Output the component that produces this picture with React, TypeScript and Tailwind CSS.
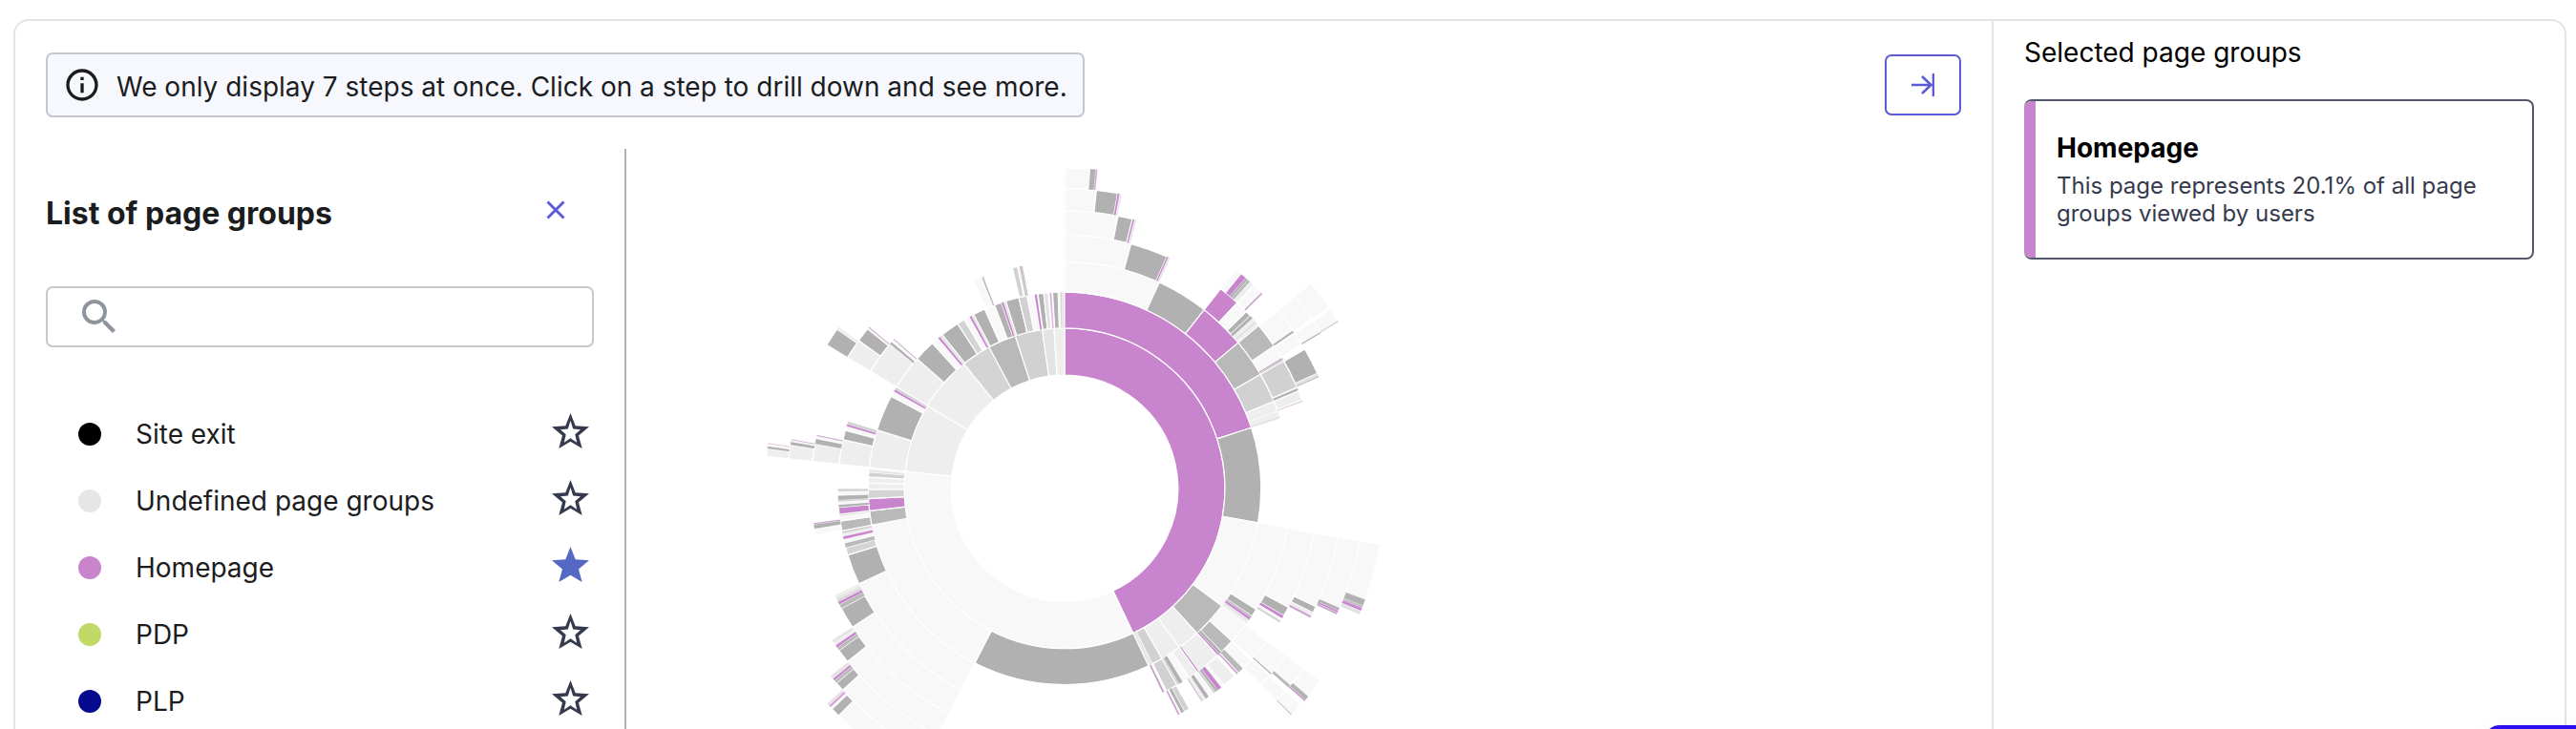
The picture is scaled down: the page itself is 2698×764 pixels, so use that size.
import { MdOutlineInfo, MdSearch } from 'react-icons/md';

const PURPLE = '#c885ce';
const FAINT = '#f8f8f8';
const PALE = '#eeeeee';
const MIST = '#e3e3e3';
const SOFT = '#d1d1d1';
const MID = '#b9b9b9';
const GREY = '#b1b1b1';

type Sector = [start: number, end: number, color: string];

// One list per ring, innermost first; angles are degrees clockwise from the top.
const rings: Sector[][] = [
  [
    [0, 154.7, PURPLE], [154.7, 276.1, FAINT], [276.1, 301.1, PALE], [301.1, 321.1, PALE],
    [321.1, 331.9, '#d4d4d4'], [331.9, 342.1, MID], [342.1, 352, SOFT], [352, 356.2, MIST], [356.2, 360, PALE],
  ],
  [
    [0, 72, PURPLE], [72, 100.1, GREY], [100.1, 126.8, FAINT], [126.8, 137.6, MID], [137.6, 144.2, PALE],
    [144.2, 150.3, PALE], [150.3, 153.5, SOFT], [153.5, 154.1, MIST], [154.1, 154.7, MIST],
    [154.7, 207.2, GREY], [207.2, 259.2, FAINT], [259.2, 263.4, MID], [263.4, 267, PURPLE], [267, 269.7, '#d4d4d4'],
    [269.7, 271.6, PALE], [271.6, 273.3, PALE], [273.3, 274.8, SOFT], [274.8, 275.5, MIST], [275.5, 276.1, FAINT],
    [276.1, 287.3, PALE], [287.3, 298, GREY], [298, 299.6, FAINT], [299.6, 300.3, PURPLE], [300.3, 301.1, SOFT],
    [301.1, 311.3, PALE], [311.3, 317.7, GREY], [317.7, 319.9, FAINT], [319.9, 320.6, PURPLE], [320.6, 321.5, MIST],
    [321.5, 327, GREY], [327, 329.3, '#d4d4d4'], [329.3, 331, FAINT], [331, 331.7, PURPLE], [331.7, 332.4, MIST],
    [332.4, 336, GREY], [336, 339.1, FAINT], [339.1, 341.2, GREY], [341.2, 341.9, PURPLE], [341.9, 342.6, MIST],
    [342.6, 346.5, GREY], [346.5, 349, SOFT], [349, 351.2, FAINT], [351.2, 351.9, PURPLE], [352.2, 353.9, GREY],
    [353.9, 355.2, MIST], [355.6, 356.2, '#dcb4e0'], [356.5, 358.1, GREY], [358.1, 358.7, FAINT],
    [358.7, 359.2, SOFT], [359.2, 359.8, MIST],
  ],
  [
    [0, 24.7, FAINT], [24.7, 38, GREY], [38, 50, PURPLE], [50, 59.8, MID], [59.8, 67.4, SOFT], [67.4, 70.1, PALE],
    [70.1, 71.3, PALE], [71.3, 72, MIST],
    [100.1, 122.3, FAINT], [122.3, 124.3, GREY], [124.3, 124.8, MID], [124.8, 125.5, PURPLE], [125.5, 126.1, MIST],
    [126.1, 126.8, PALE], [126.8, 132.4, FAINT], [132.4, 136.2, MID], [136.2, 137, GREY], [137, 137.5, PURPLE],
    [137.6, 143.7, PALE], [143.7, 144.2, PURPLE], [144.2, 146.7, PALE], [146.7, 148.6, FAINT], [148.6, 149.7, GREY],
    [149.7, 150.3, SOFT], [150.3, 153.3, SOFT], [153.9, 154.4, '#bf9dc3'],
    [207.2, 245.1, FAINT], [245.1, 252.9, GREY], [252.9, 254.8, '#d4d4d4'], [254.8, 256, MID], [256, 257, FAINT],
    [257, 257.8, PURPLE], [257.8, 258.5, PALE], [258.5, 259.2, SOFT], [259.2, 261.7, MID], [261.7, 263, FAINT],
    [263, 263.4, SOFT], [263.4, 265.2, PURPLE], [265.2, 265.9, GREY], [265.9, 266.6, FAINT], [266.6, 267, SOFT],
    [267, 268.2, GREY], [268.2, 269.2, FAINT], [269.2, 269.9, SOFT],
    [276.1, 282.4, PALE], [282.4, 284.8, GREY], [284.8, 285.9, FAINT], [285.9, 286.5, PURPLE], [286.5, 287.2, SOFT],
    [301.1, 309.6, PALE], [309.6, 310.3, GREY], [310.3, 311, FAINT], [311, 311.3, '#c9a9cc'],
    [336.4, 338.6, FAINT], [338.6, 339, GREY], [346.7, 348, SOFT], [348, 348.5, FAINT], [348.5, 349, MID],
    [349, 349.3, '#c9a9cc'],
  ],
  [
    [0, 15.2, FAINT], [15.2, 23.8, GREY], [23.8, 24.2, PURPLE], [24.2, 24.6, MIST], [38, 42.9, PURPLE],
    [42.9, 45.8, FAINT], [45.8, 47.1, GREY], [47.1, 47.9, GREY], [47.9, 48.6, PALE], [48.6, 49.3, MIST], [49.3, 50, PALE],
    [50, 55.8, MID], [55.8, 59, FAINT], [59, 59.4, GREY], [59.4, 59.8, '#d9b3dc'], [59.8, 66.5, SOFT],
    [66.7, 67.3, GREY], [67.4, 69.6, PALE], [69.7, 70, '#dcc0de'],
    [100.1, 118, FAINT], [118, 120.2, GREY], [120.2, 120.9, PURPLE], [120.9, 121.5, FAINT], [121.5, 122, SOFT],
    [127, 132.2, FAINT], [132.5, 135.3, FAINT], [135.3, 136.6, MID], [136.8, 137.2, '#cf9fd3'],
    [137.8, 141, PALE], [141, 141.8, FAINT], [141.8, 142.8, PURPLE], [142.8, 143.5, GREY], [143.5, 144, SOFT],
    [144.2, 145.3, FAINT], [145.3, 146.2, GREY], [146.2, 146.9, PALE], [146.9, 147.3, '#dac4dc'],
    [150.5, 151.8, SOFT], [151.8, 152.6, GREY], [152.6, 153, FAINT], [153, 153.4, '#c593ca'],
    [207.2, 236.8, FAINT], [236.8, 241.7, GREY], [241.7, 242.7, MID], [242.7, 243.4, PURPLE], [243.4, 243.9, SOFT],
    [243.9, 244.5, MIST], [244.5, 245.1, PALE],
    [259.3, 260.8, FAINT], [260.8, 261.8, GREY], [261.8, 262.1, '#c593ca'],
    [276.1, 280.1, PALE], [280.1, 281.3, GREY], [281.3, 281.9, FAINT], [281.9, 282.2, '#c9a0cd'],
    [301.1, 305.7, PALE], [305.7, 309, GREY], [309, 309.3, FAINT], [309.3, 309.6, '#c9a9cc'],
  ],
  [
    [0, 11.1, FAINT], [11.1, 14.1, GREY], [14.2, 14.6, PURPLE], [14.6, 15, MIST], [38.1, 39.5, FAINT],
    [39.5, 40.7, PURPLE], [40.7, 41.3, GREY], [41.3, 41.9, MID], [41.9, 42.9, PALE], [42.9, 45, FAINT],
    [45.1, 45.5, '#c9a9cc'],
    [50.2, 55.3, FAINT], [55.3, 55.8, GREY], [56, 58.8, FAINT], [59.9, 65.5, GREY], [65.5, 66, MIST], [66, 66.4, '#cdbdcf'],
    [100.1, 115.2, FAINT], [115.2, 116.6, GREY], [116.6, 117.3, PALE], [117.3, 117.8, '#cfa3d3'],
    [127, 131.8, FAINT], [131.8, 132.1, GREY], [132.5, 135, FAINT],
    [207.2, 231.4, FAINT], [231.4, 234.3, GREY], [234.3, 235, MID], [235, 235.6, PURPLE], [235.6, 236.2, PALE], [236.2, 236.8, MIST],
    [276.1, 279, PALE], [279, 279.7, GREY], [279.7, 280, FAINT], [280, 280.2, '#c9a0cd'],
    [301.1, 305, GREY], [305, 305.6, PALE],
  ],
  [
    [0, 6.1, FAINT], [6.1, 10.2, GREY], [10.2, 10.6, PURPLE], [10.7, 11, MIST],
    [50.2, 55.5, FAINT], [56, 58.5, FAINT], [58.5, 58.8, GREY],
    [100.1, 113.5, FAINT], [113.5, 114.1, GREY], [114.1, 114.5, PURPLE], [114.5, 114.9, '#c4a9c7'],
    [127, 131.1, FAINT], [131.1, 131.7, MID], [132.5, 135, FAINT],
    [207.2, 227.7, FAINT], [227.7, 229.5, GREY], [229.5, 230.1, MID], [230.1, 230.6, PURPLE], [230.6, 231.3, MIST],
    [276.1, 277.6, PALE], [277.6, 278.1, GREY], [278.1, 278.4, FAINT], [278.5, 278.7, '#d9b9dc'],
  ],
  [
    [0, 4.6, FAINT], [4.6, 5.6, GREY], [5.6, 5.9, '#cf9fd3'],
    [50.2, 55.6, FAINT], [56, 58.4, FAINT], [58.4, 58.7, SOFT],
    [100.1, 110.3, FAINT], [110.3, 111.5, GREY], [111.5, 111.9, MID], [111.9, 112.5, PURPLE], [112.5, 113.2, MIST],
    [127, 130.5, FAINT], [130.5, 131.3, GREY], [131.3, 131.6, '#c593ca'], [132.5, 134.8, FAINT], [134.8, 135.1, SOFT],
    [207.2, 224.8, FAINT], [224.8, 226.5, GREY], [226.5, 226.9, FAINT], [226.9, 227.3, '#d29bd7'], [227.3, 227.8, MIST],
  ],
];

// Rings cover equal areas, so the radius grows with the square root of the depth.
const radius = (depth: number) => 118.75 * Math.sqrt(depth);

function arc(depth: number, start: number, end: number) {
  const inner = radius(depth);
  const outer = radius(depth + 1);
  const at = (r: number, deg: number) => {
    const a = (deg * Math.PI) / 180;
    return `${(r * Math.sin(a)).toFixed(2)} ${(-r * Math.cos(a)).toFixed(2)}`;
  };
  const large = end - start > 180 ? 1 : 0;
  return `M${at(outer, start)}A${outer} ${outer} 0 ${large} 1 ${at(outer, end)}L${at(inner, end)}A${inner} ${inner} 0 ${large} 0 ${at(inner, start)}Z`;
}

function Sunburst() {
  return (
    <svg className="ml-[123px] h-[608px] w-[700px] shrink-0" viewBox="-336 -355.8 700 608">
      {rings.map((ring, i) =>
        ring.map(([start, end, color]) => (
          <path
            key={`${i}-${start}`}
            d={arc(i + 1, start, end)}
            fill={color}
            stroke="#fff"
            strokeWidth={end - start < 1.3 ? 0.25 : 1.2}
          />
        )),
      )}
    </svg>
  );
}

function Star({ filled }: { filled: boolean }) {
  const outline = 'M19.500 0 24.700 13.200 39 14.300 28 23.400 31.700 37 19.500 29.700 7.300 37 11 23.400 0 14.300 14.300 13.200Z';
  const hole = 'M19.500 8 22.200 16.500 30 17.300 24.300 22.300 26.200 30.800 19.500 26.200 12.800 30.800 14.700 22.300 9 17.300 16.800 16.500Z';
  return (
    <svg className="mr-[5px] mb-[8px] h-[37px] w-[39px]" viewBox="0 0 39 37">
      <path d={filled ? outline : outline + hole} fillRule="evenodd" fill={filled ? '#5468c4' : '#363a4d'} />
    </svg>
  );
}

const groups = [
  { name: 'Site exit', dot: 'bg-black', starred: false },
  { name: 'Undefined page groups', dot: 'bg-[#e6e6e6]', starred: false },
  { name: 'Homepage', dot: 'bg-[#c885ce]', starred: true },
  { name: 'PDP', dot: 'bg-[#c1d967]', starred: false },
  { name: 'PLP', dot: 'bg-[#050a8f]', starred: false },
];

function GroupList() {
  return (
    <section className="h-[608px] w-[608px] shrink-0 border-r-2 border-[#abb0b9] pr-8">
      <header className="flex h-[144px] items-start justify-between pr-[28px] pt-[46px]">
        <h2 className="pt-px text-[32px] leading-[42px] font-bold">List of page groups</h2>
        <svg className="mt-[6px] size-[24px]" viewBox="0 0 24 24" fill="none" stroke="#5b5bd6" strokeWidth="3">
          <path d="M3.500 3.500 20.500 20.500M20.500 3.500 3.500 20.500" />
        </svg>
      </header>
      <div className="flex h-16 items-center rounded-[7px] border-2 border-[#c5c9ce] pl-[30px]">
        <MdSearch className="size-12 text-[#8d949e]" />
      </div>
      <ul className="mt-[56px]">
        {groups.map((g) => (
          <li key={g.name} className="flex h-[70px] items-center pl-[34px]">
            <span className={`size-6 rounded-full ${g.dot}`} />
            <span className="ml-9 flex-1 text-[28px]">{g.name}</span>
            <Star filled={g.starred} />
          </li>
        ))}
      </ul>
    </section>
  );
}

export default function App() {
  return (
    <div className="relative h-[764px] w-[2698px] overflow-hidden bg-white pt-[20px] pl-[14px] font-['Inter',sans-serif] text-[#1b1c1e]">
      <div className="flex h-[800px] w-[2674px] rounded-[16px] border-2 border-[#e2e3e8]">
        <main className="w-[2072px] shrink-0 border-r-2 border-[#e2e3e8] pt-[33px] pl-[32px]">
          <div className="flex h-[101px] items-start justify-between pr-[32px]">
            <div className="flex h-[68px] w-[1088px] items-center rounded-[7px] border-2 border-[#c5c7ce] bg-[#f7f8fe] pl-[16px]">
              <MdOutlineInfo className="size-[40px]" />
              <p className="ml-4 pt-[3px] whitespace-nowrap text-[28px]">
                We only display 7 steps at once. Click on a step to drill down and see more.
              </p>
            </div>
            <button className="mt-[2px] flex h-16 w-20 items-center justify-center rounded-[7px] border-2 border-[#5b5bd6]">
              <svg className="size-6" viewBox="0 0 24 24" fill="none" stroke="#5b5bd6" strokeWidth="2.6">
                <path d="M0 12H21M11 3l9.500 9-9.500 9M23 0V24" />
              </svg>
            </button>
          </div>
          <div className="flex">
            <GroupList />
            <Sunburst />
          </div>
        </main>
        <aside className="flex-1 pt-[14px] pr-[32px] pl-[32px]">
          <h2 className="text-[28px] leading-[38px] text-black">Selected page groups</h2>
          <div className="mt-[30px] flex h-[168px] overflow-hidden rounded-[8px] border-2 border-l-0 border-[#55586a]">
            <div className="-my-[2px] w-3 shrink-0 bg-[#c885ce]" />
            <div className="pt-[30px] pl-[22px]">
              <h3 className="text-[28px] leading-[38px] font-bold text-black">Homepage</h3>
              <p className="mt-[6px] w-[470px] text-[24px] leading-[29px] text-[#363a4d]">
                This page represents 20.1% of all page groups viewed by users
              </p>
            </div>
          </div>
        </aside>
      </div>
      <div className="absolute top-[760px] left-[2602px] h-16 w-[120px] rounded-[16px] bg-[#2b0df0] shadow-[0_0_24px_rgba(0,0,0,0.03)]" />
    </div>
  );
}
